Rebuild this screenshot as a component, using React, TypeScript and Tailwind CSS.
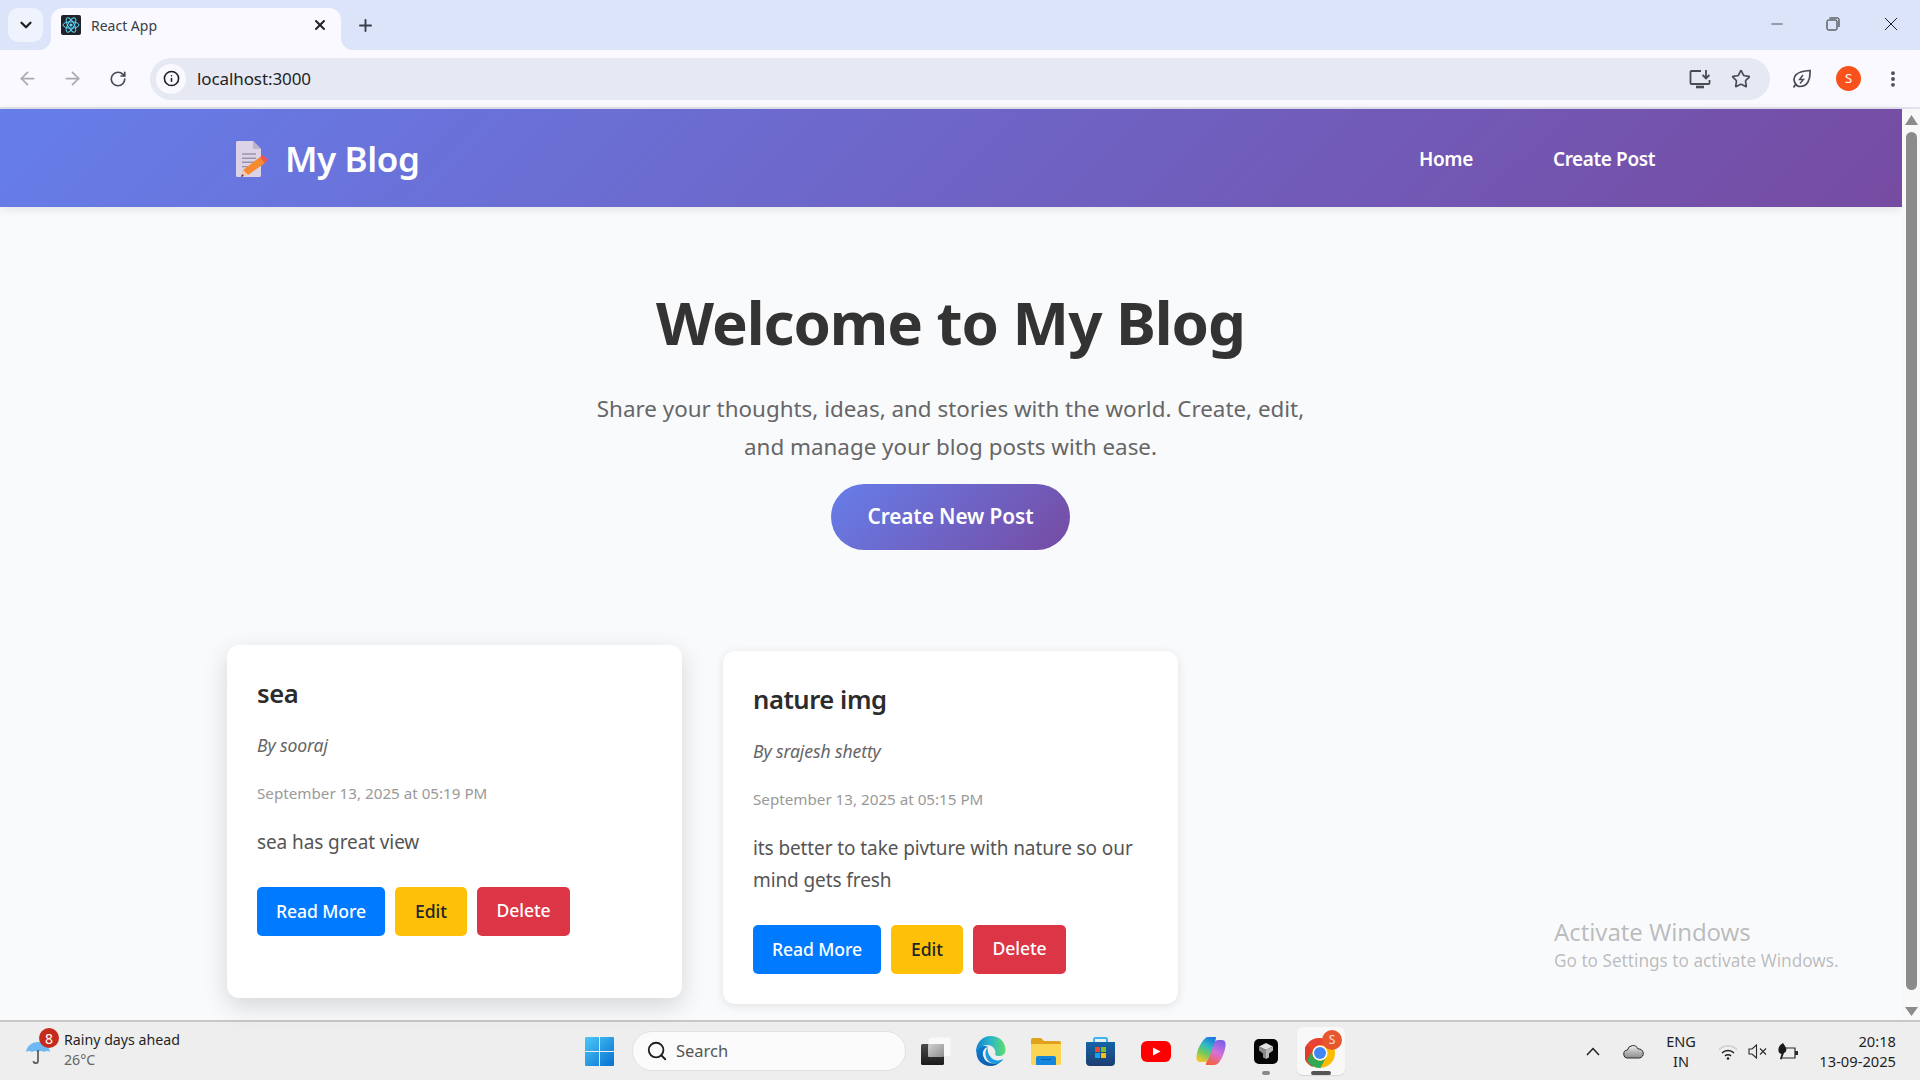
import React from "react";
import { ArrowLeft, ArrowRight, RotateCw, Info, Star, X, Plus, ChevronDown, Minus, Search, EllipsisVertical } from "lucide-react";

const ui = "font-['Noto_Sans','Open_Sans',sans-serif]";

function ReactIcon() {
  return (
    <svg width="20" height="20" viewBox="0 0 20 20" className="rounded-[2px] bg-[#20232a]">
      <g fill="none" stroke="#61dafb" strokeWidth="1">
        <ellipse cx="10" cy="10" rx="8" ry="3.2" />
        <ellipse cx="10" cy="10" rx="8" ry="3.2" transform="rotate(60 10 10)" />
        <ellipse cx="10" cy="10" rx="8" ry="3.2" transform="rotate(120 10 10)" />
      </g>
      <circle cx="10" cy="10" r="1.6" fill="#61dafb" />
    </svg>
  );
}

function MemoIcon() {
  return (
    <svg width="32" height="36" viewBox="0 0 32 36" className="shrink-0">
      <path d="M0 1.500A1.500 1.500 0 0 1 1.500 0H17l8 8v26.500a1.500 1.500 0 0 1-1.500 1.500h-22A1.500 1.500 0 0 1 0 34.500z" fill="#dcd4e6" />
      <path d="M17 0v8h8z" fill="#bdb4cc" />
      <path d="M6 13h14M6 17.300h14M6 21.300h12M6 25.600h8" stroke="#9a92aa" strokeWidth="1.400" />
      <path d="M7 29 24 16l5 6-17 12z" fill="#f58a2e" />
      <path d="M24 16l3-2 5 5-3 3z" fill="#f4544f" />
      <path d="M7 29l5 5-7 2z" fill="#f3c9a4" />
      <path d="M6 33l-1 3 3-1z" fill="#702a5a" />
    </svg>
  );
}

function InstallIcon() {
  return (
    <svg width="22" height="20" viewBox="0 0 22 20" fill="none" stroke="#474b54" strokeWidth="1.800">
      <path d="M12 2H2.500a1 1 0 0 0-1 1v11a1 1 0 0 0 1 1h17a1 1 0 0 0 1-1v-3" />
      <path d="M17 1v8M13.600 6l3.400 3.400L20.400 6" />
      <path d="M7 18h8" strokeWidth="2.600" />
    </svg>
  );
}

function LeafIcon() {
  return (
    <svg width="20" height="20" viewBox="0 0 20 20" fill="none" stroke="#474b54" strokeWidth="1.700">
      <path d="M3 14C0 8 4 2 18 1.500c.6 10-3 16-10 16-2 0-3.600-.8-5-3.500z" />
      <path d="M1.500 18.500 3.500 15.500" />
      <path d="M11 6 7.500 10.500h4L8 14.500" strokeWidth="1.400" />
    </svg>
  );
}

function WinLogo() {
  return (
    <svg width="29" height="29" viewBox="0 0 29 29" className="shrink-0">
      <defs>
        <linearGradient id="wl" x1="0" y1="0" x2="1" y2="1">
          <stop offset="0" stopColor="#4cc8f8" />
          <stop offset="1" stopColor="#0670d0" />
        </linearGradient>
      </defs>
      <path d="M0 1a1 1 0 0 1 1-1h13v14H0zM15 0h13a1 1 0 0 1 1 1v13H15zM0 15h14v14H1a1 1 0 0 1-1-1zM15 15h14v13a1 1 0 0 1-1 1H15z" fill="url(#wl)" />
    </svg>
  );
}

function TaskView() {
  return (
    <svg width="30" height="28" viewBox="0 0 30 28" className="block">
      <defs>
        <linearGradient id="tvf" x1="0" y1="0" x2="0" y2="1">
          <stop offset="0" stopColor="#4a4a4a" />
          <stop offset="1" stopColor="#1a1a1a" />
        </linearGradient>
        <linearGradient id="tvm" x1="0" y1="0" x2="1" y2="1">
          <stop offset="0" stopColor="#d2d2d2" />
          <stop offset="1" stopColor="#8e8e8e" />
        </linearGradient>
      </defs>
      <rect x="7" y="0" width="23" height="20" rx="1.500" fill="#f9f9f9" stroke="#e2e2e2" strokeWidth="0.600" />
      <rect x="0" y="7" width="23" height="21" rx="1.500" fill="url(#tvf)" />
      <rect x="7" y="7" width="16" height="13" rx="1" fill="url(#tvm)" />
    </svg>
  );
}

function EdgeIcon() {
  return (
    <svg width="31" height="30" viewBox="0 0 30 30" className="block">
      <defs>
        <linearGradient id="eg" x1="0" y1="0.400" x2="1" y2="0.400">
          <stop offset="0" stopColor="#1480d2" />
          <stop offset="0.500" stopColor="#2ab8c8" />
          <stop offset="1" stopColor="#62dc6a" />
        </linearGradient>
        <linearGradient id="eb" x1="0" y1="0" x2="1" y2="1">
          <stop offset="0" stopColor="#0f7fd4" />
          <stop offset="1" stopColor="#0a4f9e" />
        </linearGradient>
      </defs>
      <path d="M1 17C1 10 8 9 13 11c-6 1-7 7-4 12 3 5 11 6 17 2-3 3-7 5-11 5C7 30 1 24 1 17z" fill="url(#eb)" />
      <path d="M.5 17C0 7 7 0 15 0c9 0 15 6 15 14 0 4-3 6-7 6-3 0-4-1-3-3 0-4-3-8-8-8-5 0-9 3-11.500 8z" fill="url(#eg)" />
      <path d="M12 12c-3 2-3 10 2 14 5 3 11 2 14-3-4 2-9 2-12-1-3-3-4-6-4-10z" fill="#1d9be0" />
    </svg>
  );
}

function FolderIcon() {
  return (
    <svg width="30" height="27" viewBox="0 0 30 27" className="block">
      <path d="M0 2a2 2 0 0 1 2-2h8l3 3h15a2 2 0 0 1 2 2v4H0z" fill="#dfa21a" />
      <path d="M0 6h30v19.500a1.500 1.500 0 0 1-1.500 1.500h-27A1.500 1.500 0 0 1 0 25.500z" fill="#fcd553" />
      <path d="M5 20a2 2 0 0 1 2-2h16a2 2 0 0 1 2 2v7H5z" fill="#1486dc" />
      <path d="M10 21.500h10" stroke="#0c5fa8" strokeWidth="1" />
    </svg>
  );
}

function StoreIcon() {
  return (
    <svg width="29" height="29" viewBox="0 0 29 29" className="block">
      <defs>
        <linearGradient id="sg" x1="0" y1="0" x2="0" y2="1">
          <stop offset="0" stopColor="#1464a8" />
          <stop offset="1" stopColor="#1d3d70" />
        </linearGradient>
      </defs>
      <path d="M8 6V2.500a1.500 1.500 0 0 1 1.500-1.500h10A1.500 1.500 0 0 1 21 2.500V6" fill="none" stroke="#3cb4ee" strokeWidth="2" />
      <path d="M0 5h29v20a4 4 0 0 1-4 4H4a4 4 0 0 1-4-4z" fill="url(#sg)" />
      <rect x="9" y="10" width="5" height="5" fill="#ea4a2a" />
      <rect x="15" y="10" width="5" height="5" fill="#7cbb2a" />
      <rect x="9" y="16" width="5" height="5" fill="#14a4ec" />
      <rect x="15" y="16" width="5" height="5" fill="#fbbb17" />
    </svg>
  );
}

function YoutubeIcon() {
  return (
    <svg width="30" height="21" viewBox="0 0 30 21" className="block">
      <rect width="30" height="21" rx="6" fill="#f00" />
      <path d="M12 6.500 19.500 10.500 12 14.500z" fill="#fff" />
    </svg>
  );
}

function CopilotIcon() {
  return (
    <svg width="30" height="28" viewBox="0 0 30 28" className="block">
      <defs>
        <linearGradient id="c1" x1="0.700" y1="0" x2="0.300" y2="1">
          <stop offset="0" stopColor="#1f78e0" />
          <stop offset="0.350" stopColor="#30b8c8" />
          <stop offset="0.650" stopColor="#6ccb5a" />
          <stop offset="1" stopColor="#f5c52c" />
        </linearGradient>
        <linearGradient id="c2" x1="0.700" y1="0" x2="0.300" y2="1">
          <stop offset="0" stopColor="#7a62e8" />
          <stop offset="0.500" stopColor="#d870d8" />
          <stop offset="1" stopColor="#f4603c" />
        </linearGradient>
      </defs>
      <path d="M18 28h-7c-2 0-1-1-.5-3L17 7c1-3 3-4 6-4h3c3 0 4 3 3.500 6-1 7-3.500 12-5.500 15-2 3-4 4-6 4z" fill="url(#c2)" />
      <path d="M12 0h7c2 0 1 1 .5 3L13 21c-1 3-3 4-6 4H4c-3 0-4-3-3.500-6 1-7 3.500-11 5.500-14 2-3 4-5 6-5z" fill="url(#c1)" />
    </svg>
  );
}

function BlackAppIcon() {
  return (
    <svg width="24" height="25" viewBox="0 0 24 25" className="block">
      <rect width="24" height="25" rx="5" fill="#050505" />
      <path d="M12 4l7 3.500-7 3.500-7-3.500z" fill="#e0e0e0" />
      <path d="M5 7.500l7 3.500v9l-3-1.500v-4l-4-3z" fill="#8a8a8a" />
      <path d="M19 7.500 12 11v9l3-1.500v-4l4-3z" fill="#b8b8b8" />
    </svg>
  );
}

function ChromeIcon() {
  return (
    <svg width="30" height="30" viewBox="0 0 32 32" className="block">
      <circle cx="16" cy="16" r="16" fill="#fbbc04" />
      <path d="M16 0a16 16 0 0 1 13.860 8H16a8 8 0 0 0-7.400 5L3 5.500A16 16 0 0 1 16 0z" fill="#ea4335" />
      <path d="M3 5.500 8.600 13a8 8 0 0 0 3.400 10l-4 8A16 16 0 0 1 3 5.500z" fill="#e23c2e" />
      <path d="M8 29.860 12 23a8 8 0 0 0 10 -1.500l-5.500 10.500a16 16 0 0 1-8.500-2.140z" fill="#34a853" />
      <path d="M2 24 8 13a8 8 0 0 0 6 10.800L8 30A16 16 0 0 1 2 24z" fill="#34a853" />
      <circle cx="16" cy="16" r="8" fill="#fff" />
      <circle cx="16" cy="16" r="6.400" fill="#4285f4" />
    </svg>
  );
}

function TrayChevron() {
  return (
    <svg width="14" height="9" viewBox="0 0 14 9" fill="none" stroke="#1f1f1f" strokeWidth="1.500" className="shrink-0">
      <path d="M1 8l6-6.500L13 8" />
    </svg>
  );
}

function TrayCloud() {
  return (
    <svg width="21" height="15" viewBox="0 0 21 15" className="shrink-0">
      <defs>
        <linearGradient id="cl" x1="0" y1="0" x2="0" y2="1">
          <stop offset="0" stopColor="#f4f4f4" />
          <stop offset="0.500" stopColor="#b8b8b8" />
          <stop offset="1" stopColor="#8e8e8e" />
        </linearGradient>
      </defs>
      <path d="M5 14a4 4 0 0 1-.5-8 5.500 5.500 0 0 1 10.500-1 4.500 4.500 0 0 1 1.500 9z" fill="url(#cl)" stroke="#2a2a2a" strokeWidth="1" />
    </svg>
  );
}

function TrayWifi() {
  return (
    <svg width="20" height="17" viewBox="0 0 20 17" fill="none" className="shrink-0">
      <path d="M1 6.500a13 13 0 0 1 18 0" stroke="#c8c8c8" strokeWidth="1.300" />
      <path d="M4 10a8.600 8.600 0 0 1 12 0" stroke="#1f1f1f" strokeWidth="1.400" />
      <path d="M7 13a4.200 4.200 0 0 1 6 0" stroke="#1f1f1f" strokeWidth="1.400" />
      <circle cx="10" cy="15.500" r="1.300" fill="#1f1f1f" />
    </svg>
  );
}

function TraySpeaker() {
  return (
    <svg width="19" height="15" viewBox="0 0 19 15" fill="none" stroke="#2a2a2a" strokeWidth="1.100" className="shrink-0">
      <path d="M1 5h3l4.500-4v13L4 10H1z" />
      <path d="M12 4.500l6 6M18 4.500l-6 6" />
    </svg>
  );
}

function TrayBattery() {
  return (
    <svg width="21" height="17" viewBox="0 0 21 17" className="shrink-0">
      <path d="M3 5h14v10H3" fill="none" stroke="#2a2a2a" strokeWidth="1.200" />
      <path d="M17 8h3v4h-3" fill="#2a2a2a" />
      <path d="M5 0C2 2 0 4 0.500 8c.3 2 2 3 3 3l-1.500 5 1.500.5L6 10c2-.5 3-3 2-5-.5-2-2-3-3-5z" fill="#1a1a1a" />
    </svg>
  );
}

function Umbrella() {
  return (
    <svg width="24" height="22" viewBox="0 0 24 22" className="block">
      <path d="M0 10C1 3 7 0 12 0s11 3 12 10c-2-1.500-4-1.500-6 0-2-1.500-4-1.500-6 0-2-1.500-4-1.500-6 0-2-1.500-4-1.500-6 0z" fill="#6cb9f3" />
      <path d="M12 8v11a2 2 0 0 1-4.500 0" fill="none" stroke="#606060" strokeWidth="1.800" />
    </svg>
  );
}

function TabFlare({ side }: { side: "l" | "r" }) {
  return side === "l" ? (
    <svg width="12" height="12" viewBox="0 0 12 12" className="absolute bottom-0 -left-3">
      <path d="M12 0v12H0A12 12 0 0 0 12 0z" fill="#f9f9ff" />
    </svg>
  ) : (
    <svg width="12" height="12" viewBox="0 0 12 12" className="absolute bottom-0 -right-3">
      <path d="M0 0v12h12A12 12 0 0 1 0 0z" fill="#f9f9ff" />
    </svg>
  );
}

function Card({ title, author, date, lines, hover }: { title: string; author: string; date: string; lines: string[]; hover?: boolean }) {
  return (
    <article
      className={
        hover
          ? "h-[353px] -translate-y-1.5 rounded-xl bg-white px-[30px] pt-[32px] shadow-[0_8px_25px_rgba(0,0,0,0.15)]"
          : "h-[353px] rounded-xl bg-white px-[30px] pt-[32px] shadow-[0_2px_10px_rgba(0,0,0,0.1)]"
      }
    >
      <h3 className="text-[25.600px] leading-[34px] font-semibold tracking-[-0.45px] text-[#2c2c2c]">{title}</h3>
      <p className="mt-[21px] text-[17.600px] leading-[26px] tracking-[-0.12px] text-[#666666] italic">{author}</p>
      <p className="mt-[22px] text-[15.200px] leading-[26px] text-[#999999]">{date}</p>
      <div className="mt-[20px] text-[19px] leading-[32px] tracking-[-0.1px] text-[#555555]">
        {lines.map((l) => (
          <p key={l}>{l}</p>
        ))}
      </div>
      <div className="mt-[29px] flex gap-[10px]">
        <button className="h-[49px] w-[128px] rounded-[5px] bg-[#007bff] text-[17.600px] font-medium tracking-[-0.1px] text-white">Read More</button>
        <button className="h-[49px] w-[72px] rounded-[5px] bg-[#ffc107] text-[17.600px] font-medium tracking-[-0.1px] text-[#212529]">Edit</button>
        <button className="h-[49px] w-[93px] rounded-[5px] bg-[#dc3545] pb-0.5 text-[17.600px] font-medium tracking-[-0.1px] text-white">Delete</button>
      </div>
    </article>
  );
}

export default function App() {
  return (
    <div className={`${ui} relative flex h-[1080px] w-[1920px] flex-col overflow-hidden bg-[#f9fafc]`}>
      {/* tab strip */}
      <div className="flex h-[50px] shrink-0 items-end bg-[#dbe4f9]">
        <div className="mb-2 ml-2 flex h-[34px] w-[35px] items-center justify-center rounded-[10px] bg-[#eff3fd] text-[#1f1f1f]">
          <ChevronDown size={18} strokeWidth={3} />
        </div>
        <div className="relative ml-2 flex h-[42px] w-[290px] items-center rounded-t-xl bg-[#f9f9ff] pr-[13px] pb-[8px] pl-[10px]">
          <TabFlare side="l" />
          <TabFlare side="r" />
          <ReactIcon />
          <span className="ml-[10px] flex-1 text-[14px] text-[#3c3f45]">React App</span>
          <X size={16} strokeWidth={3} className="text-[#222]" />
        </div>
        <div className="mb-[8px] ml-[15px] flex h-[34px] items-center text-[#3a3f4b]">
          <Plus size={19} strokeWidth={2.400} />
        </div>
        <div className="mb-[12px] ml-auto flex h-[28px] items-center text-[#1f1f1f]">
          <Minus size={18} strokeWidth={1} className="mr-[40px]" />
          <svg width="14" height="14" viewBox="0 0 14 14" fill="none" stroke="#1f1f1f" strokeWidth="1" className="mr-[44px]">
            <rect x="1" y="3" width="10" height="10" rx="1.500" />
            <path d="M3.500 1H11.500a1.500 1.500 0 0 1 1.500 1.500V10" />
          </svg>
          <svg width="14" height="14" viewBox="0 0 14 14" stroke="#1f1f1f" strokeWidth="1" className="mr-[22px]">
            <path d="M1 1l12 12M13 1 1 13" />
          </svg>
        </div>
      </div>
      {/* toolbar */}
      <div className="flex h-[59px] shrink-0 items-center rounded-t-xl border-b-2 border-[#e0e2ec] bg-[#f9f9ff]">
        <ArrowLeft size={21} className="ml-[17px] text-[#a9abb0]" />
        <ArrowRight size={21} className="ml-[24px] text-[#a9abb0]" />
        <RotateCw size={18} strokeWidth={2.200} className="ml-[26px] text-[#474b54]" />
        <div className="ml-[23px] flex h-[42px] w-[1620px] items-center rounded-full bg-[#e6e9f3] pr-[19px] pl-[6px]">
          <div className="flex h-[30px] w-[30px] items-center justify-center rounded-full bg-[#f9f9ff]">
            <Info size={17} strokeWidth={2.200} className="text-[#1f1f1f]" />
          </div>
          <span className="ml-[11px] flex-1 text-[17px] tracking-[-0.1px] text-[#1f1f1f]">localhost:3000</span>
          <InstallIcon />
          <Star size={20} strokeWidth={2} className="ml-[20px] text-[#474b54]" />
        </div>
        <div className="ml-[22px]">
          <LeafIcon />
        </div>
        <div className="ml-[24px] flex h-[25px] w-[25px] items-center justify-center rounded-full bg-[#f9511b] text-[13px] text-white">S</div>
        <EllipsisVertical size={20} strokeWidth={2.600} className="ml-[22px] text-[#474b54]" />
      </div>
      {/* page + scrollbar */}
      <div className="flex min-h-0 flex-1">
        <main className="min-w-0 flex-1 bg-[#f9fafc]">
          <nav className="flex h-[98px] items-center bg-[linear-gradient(135deg,#667eea_0%,#764ba2_100%)] pt-[2px] pr-[247px] pl-[236px] shadow-[0_2px_10px_rgba(0,0,0,0.1)]">
            <MemoIcon />
            <span className="ml-[17px] text-[35px] font-semibold tracking-[-0.4px] text-white">My Blog</span>
            <span className="ml-auto text-[19px] font-semibold tracking-[-0.4px] text-white">Home</span>
            <span className="ml-[80px] text-[19px] font-semibold tracking-[-0.4px] text-white">Create Post</span>
          </nav>
          <section className="mt-[77px] flex flex-col items-center pr-px">
            <h1 className="text-[60px] leading-[76px] font-bold tracking-[-1.050px] text-[#333333]">Welcome to My Blog</h1>
            <p className="mt-[30px] w-[730px] text-center text-[22.400px] leading-[38px] text-[#666666]">
              Share your thoughts, ideas, and stories with the world. Create, edit, and manage your blog posts with ease.
            </p>
            <button className="mt-[18px] h-[66px] w-[239px] rounded-full bg-[linear-gradient(135deg,#667eea_0%,#764ba2_100%)] text-[20.800px] font-semibold tracking-[-0.1px] text-white">
              Create New Post
            </button>
          </section>
          <section className="mt-[101px] ml-[227px] grid w-[1447px] grid-cols-3 gap-[41px]">
            <Card hover title="sea" author="By sooraj" date="September 13, 2025 at 05:19 PM" lines={["sea has great view"]} />
            <Card title="nature img" author="By srajesh shetty" date="September 13, 2025 at 05:15 PM" lines={["its better to take pivture with nature so our", "mind gets fresh"]} />
          </section>
        </main>
        <div className="flex w-[18px] shrink-0 flex-col items-center bg-[#f8f8f8] pt-[6px]">
          <svg width="13" height="10" viewBox="0 0 13 10" className="shrink-0"><path d="M6.500 0l6.500 10H0z" fill="#8b8b8b" /></svg>
          <div className="mt-[7px] h-[858px] w-[11px] shrink-0 rounded-full bg-[#8b8b8b]" />
          <svg width="13" height="9" viewBox="0 0 13 9" className="mt-[17px] shrink-0"><path d="M6.500 9 0 0h13z" fill="#8b8b8b" /></svg>
        </div>
      </div>
      {/* taskbar */}
      <footer className="flex h-[60px] shrink-0 items-center border-t-2 border-[#c8c8c8] bg-[#eeeeee]">
        <div className="relative ml-[26px] w-[559px] shrink-0 self-stretch">
          <div className="flex h-full items-center">
            <div className="mt-[4px]"><Umbrella /></div>
            <div className="ml-[14px] -mt-[2px] text-[14.200px] leading-[20px] text-[#1f1f1f]">
              <p>Rainy days ahead</p>
              <p className="text-[#666]">26°C</p>
            </div>
          </div>
          <span className="absolute top-[6px] left-[13px] flex h-[20px] w-[20px] items-center justify-center rounded-full bg-[#c42b1c] text-[14px] text-white">8</span>
        </div>
        <WinLogo />
        <div className="ml-[18px] flex h-[40px] w-[274px] items-center rounded-full border border-[#e2e2e2] bg-[#fbfbfb] pl-[13px]">
          <Search size={22} strokeWidth={2} className="text-[#1f1f1f]" />
          <span className="ml-[8px] text-[16.500px] text-[#555]">Search</span>
        </div>
        <div className="ml-[15px]"><TaskView /></div>
        <div className="ml-[24px]"><EdgeIcon /></div>
        <div className="ml-[25px]"><FolderIcon /></div>
        <div className="ml-[25px]"><StoreIcon /></div>
        <div className="ml-[26px]"><YoutubeIcon /></div>
        <div className="ml-[25px]"><CopilotIcon /></div>
        <div className="relative ml-[28px]">
          <BlackAppIcon />
          <span className="absolute -bottom-[11px] left-[8px] h-[4px] w-[8px] rounded-full bg-[#8a8a8a]" />
        </div>
        <div className="relative ml-[19px] flex h-[48px] w-[48px] shrink-0 items-center justify-center rounded-md bg-[#f8f8f8] shadow-[0_1px_1px_rgba(0,0,0,0.1)]">
          <div className="mt-[4px] -ml-[3px]"><ChromeIcon /></div>
          <span className="absolute top-[3px] right-[3px] flex h-[20px] w-[20px] items-center justify-center rounded-full bg-[#e8562e] text-[12px] text-white/80">S</span>
          <span className="absolute bottom-0 left-[14px] h-[4px] w-[20px] rounded-full bg-[#555]" />
        </div>
        <div className="ml-[241px]"><TrayChevron /></div>
        <div className="ml-[23px]"><TrayCloud /></div>
        <div className="ml-[21px] w-[32px] text-center text-[14.500px] leading-[20px] text-[#1f1f1f]">
          <p>ENG</p>
          <p>IN</p>
        </div>
        <div className="ml-[21px]"><TrayWifi /></div>
        <div className="ml-[10px]"><TraySpeaker /></div>
        <div className="ml-[11px]"><TrayBattery /></div>
        <div className="ml-[17px] w-[80px] text-right text-[14.700px] leading-[20px] text-[#1f1f1f]">
          <p>20:18</p>
          <p>13-09-2025</p>
        </div>
      </footer>
      {/* Activate Windows watermark */}
      <div className="pointer-events-none absolute top-[916px] left-[1554px] text-[#1f1f1f]/30">
        <p className="text-[24px] leading-[32px] tracking-[-0.1px]">Activate Windows</p>
        <p className="text-[17.200px] leading-[25px]">Go to Settings to activate Windows.</p>
      </div>
    </div>
  );
}
